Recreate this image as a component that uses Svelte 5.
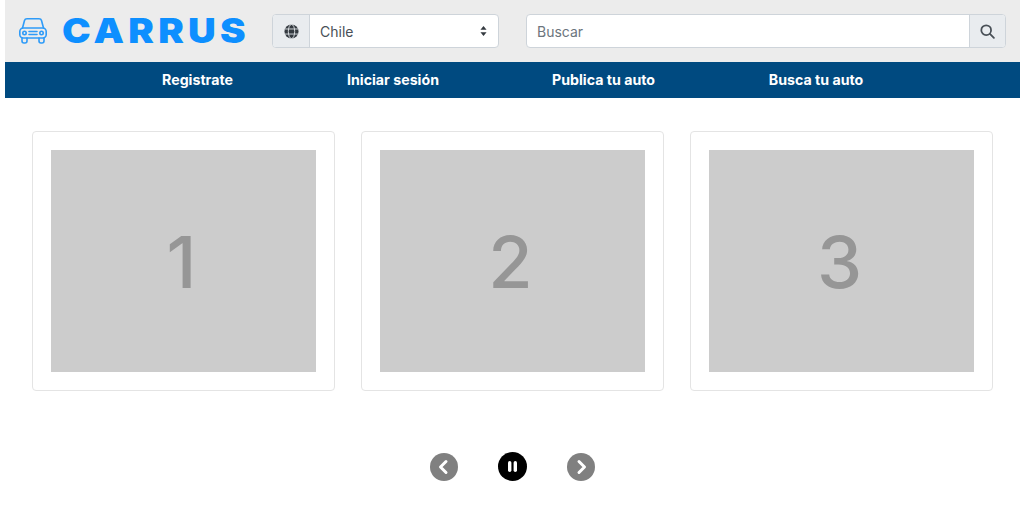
<script>
  const links = [
    { label: 'Registrate', w: 185 },
    { label: 'Iniciar sesión', w: 206 },
    { label: 'Publica tu auto', w: 215 },
    { label: 'Busca tu auto', w: 210 }
  ];
  const slides = [1, 2, 3];
</script>

<div class="page">
  <header class="top">
    <div class="brand">
      <svg class="car" viewBox="0 0 28 26" width="28" height="26" fill="none" stroke="#2e9bf8" stroke-width="1.6" stroke-linecap="round" stroke-linejoin="round">
        <path d="M3.5 10 L5.5 2.5 Q6 0.8 8 0.8 H20 Q22 0.8 22.5 2.5 L24.5 10" />
        <rect x="0.8" y="10" width="26.4" height="10" rx="3.5" />
        <circle cx="5.5" cy="15" r="1.7" />
        <circle cx="22.5" cy="15" r="1.7" />
        <path d="M10 13.5 H18 M10 16.5 H18" />
        <path d="M3 20 V23 Q3 25 5 25 H6 Q8 25 8 23 V20 M20 20 V23 Q20 25 22 25 H23 Q25 25 25 23 V20" />
      </svg>
      <span class="logo">CARRUS</span>
    </div>

    <div class="group country">
      <span class="addon globe">
        <svg viewBox="0 0 16 16" width="15" height="15">
          <circle cx="8" cy="8" r="7.5" fill="#343a40" />
          <g fill="none" stroke="#e9ecef" stroke-width="0.9">
            <ellipse cx="8" cy="8" rx="3.4" ry="7.5" />
            <path d="M1 5.3 H15 M1 10.7 H15" />
          </g>
        </svg>
      </span>
      <span class="field select">
        <span>Chile</span>
        <svg viewBox="0 0 8 13" width="7" height="10" fill="#343a40" preserveAspectRatio="none">
          <path d="M4 0 L7.5 5 H0.5 Z M4 13 L0.5 8 H7.5 Z" />
        </svg>
      </span>
    </div>

    <div class="group search">
      <span class="field placeholder">Buscar</span>
      <span class="addon lens">
        <svg viewBox="0 0 16 16" width="15" height="15" fill="none" stroke="#495057" stroke-width="1.9" stroke-linecap="round">
          <circle cx="6.6" cy="6.6" r="5.2" />
          <path d="M10.6 10.6 L14.8 14.8" />
        </svg>
      </span>
    </div>
  </header>

  <nav class="nav">
    {#each links as link}
      <a href="#top" class="link" style="width: {link.w}px">{link.label}</a>
    {/each}
  </nav>

  <section class="cards">
    {#each slides as n}
      <div class="card">
        <div class="thumb">{n}</div>
      </div>
    {/each}
  </section>

  <div class="controls">
    <button class="ctl" aria-label="Anterior">
      <svg viewBox="0 0 28 28" width="28" height="28" fill="none" stroke="#fff" stroke-width="3" stroke-linecap="round" stroke-linejoin="round"><path d="M16 8.5 L10.5 14 L16 19.5" /></svg>
    </button>
    <button class="ctl on" aria-label="Pausa">
      <svg viewBox="0 0 29 29" width="29" height="29" fill="#fff"><rect x="10" y="9" width="3.4" height="11" rx="1.7" /><rect x="15.6" y="9" width="3.4" height="11" rx="1.7" /></svg>
    </button>
    <button class="ctl" aria-label="Siguiente">
      <svg viewBox="0 0 28 28" width="28" height="28" fill="none" stroke="#fff" stroke-width="3" stroke-linecap="round" stroke-linejoin="round"><path d="M12 8.5 L17.5 14 L12 19.5" /></svg>
    </button>
  </div>
</div>

<style>
  :global(body) {
    margin: 0;
    background: #fff;
  }
  .page {
    width: 1015px;
    margin-left: 5px;
    font-family: Inter, "Liberation Sans", sans-serif;
    color: #495057;
  }
  .top {
    height: 62px;
    background: #ececec;
    display: flex;
    align-items: flex-start;
    padding-top: 14px;
    box-sizing: border-box;
  }
  .brand {
    display: flex;
    align-items: center;
    width: 267px;
    height: 34px;
    padding-left: 14px;
    box-sizing: border-box;
    flex: none;
  }
  .car {
    flex: none;
  }
  .logo {
    display: inline-block;
    margin-left: 15px;
    font-family: Inter, sans-serif;
    font-weight: 900;
    font-size: 34px;
    line-height: 34px;
    letter-spacing: 3.7px;
    color: #0d8fff;
    transform: scaleX(1.13);
    transform-origin: left center;
    white-space: nowrap;
  }
  .group {
    display: flex;
    height: 34px;
    box-sizing: border-box;
    border: 1px solid #ced4da;
    border-radius: 4px;
    background: #fff;
    overflow: hidden;
    font-size: 14px;
    flex: none;
  }
  .country {
    width: 227px;
  }
  .search {
    width: 480px;
    margin-left: 27px;
  }
  .addon {
    background: #e9ecef;
    display: flex;
    align-items: center;
    justify-content: center;
    flex: none;
  }
  .globe {
    width: 37px;
    border-right: 1px solid #ced4da;
    box-sizing: border-box;
  }
  .lens {
    width: 36px;
    border-left: 1px solid #ced4da;
    box-sizing: border-box;
  }
  .field {
    flex: 1;
    display: flex;
    align-items: center;
    justify-content: space-between;
    padding: 0 11px 0 10px;
  }
  .placeholder {
    color: #6c757d;
  }
  .nav {
    height: 36px;
    background: #004a80;
    display: flex;
    align-items: center;
    padding-left: 100px;
    padding-bottom: 1px;
    box-sizing: border-box;
  }
  .link {
    display: block;
    text-align: center;
    color: #fff;
    text-decoration: none;
    font-weight: 700;
    font-size: 14.2px;
    flex: none;
  }
  .cards {
    display: flex;
    gap: 26px;
    padding: 33px 0 0 27px;
  }
  .card {
    width: 303px;
    height: 260px;
    box-sizing: border-box;
    border: 1px solid #e4e4e4;
    border-radius: 4px;
    padding: 18px;
    flex: none;
  }
  .thumb {
    height: 222px;
    box-sizing: border-box;
    padding-right: 4px;
    background: #cccccc;
    color: #969696;
    font-family: Inter, "Liberation Sans", Arial, sans-serif;
    font-weight: 500;
    font-size: 72px;
    display: flex;
    align-items: center;
    justify-content: center;
  }
  .controls {
    display: flex;
    justify-content: center;
    gap: 40px;
    padding-top: 62px;
  }
  .ctl {
    width: 28px;
    height: 28px;
    padding: 0;
    border: 0;
    border-radius: 50%;
    background: #808080;
    display: block;
    flex: none;
  }
  .ctl svg {
    display: block;
  }
  .on {
    background: #000;
    margin-top: -1px;
    height: 29px;
    width: 29px;
  }
</style>
